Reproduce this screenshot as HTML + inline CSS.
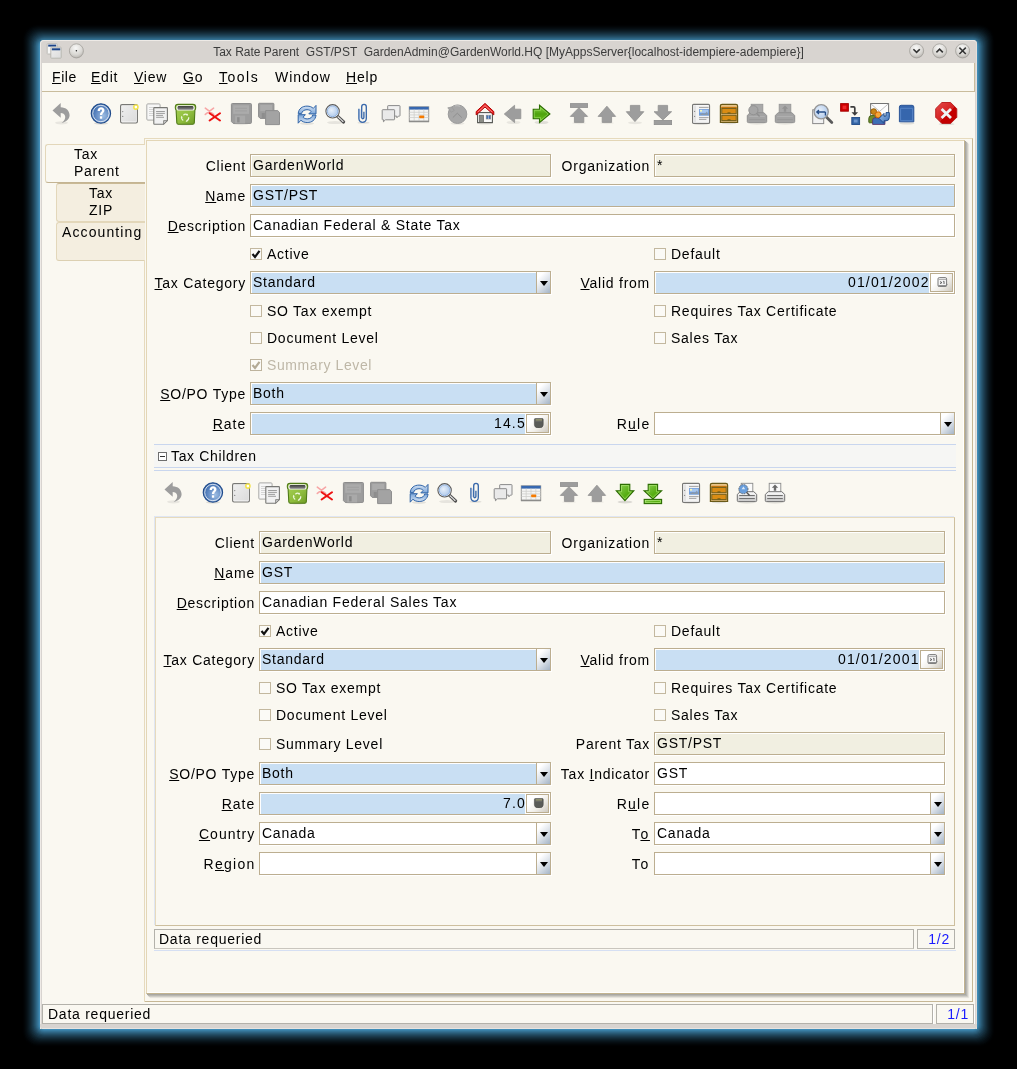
<!DOCTYPE html><html><head><meta charset="utf-8"><style>
*{margin:0;padding:0;box-sizing:border-box}
html,body{width:1017px;height:1069px;background:#000;overflow:hidden}
body{position:relative;font-family:"Liberation Sans",sans-serif;font-size:14px;letter-spacing:.75px;color:#000}
.a{position:absolute}
.t{position:absolute;white-space:pre;line-height:23px;height:23px;will-change:transform}
.u{text-decoration:underline;text-decoration-thickness:1px;text-underline-offset:1px}
.f{position:absolute;height:23px;border:1px solid #bcae90;box-shadow:inset 1px 1px 0 #fff,1px 1px 0 #fff;white-space:pre;overflow:hidden}
.fv{position:absolute;top:0;line-height:21px;height:21px;white-space:pre;will-change:transform}
.ro{background:#f1efe1}
.mb{background:#c9dff3}
.wh{background:#fff}
.cb{position:absolute;width:12px;height:12px;border:1px solid #c3b89f;background:#fbfaf6}
.dd{position:absolute;top:0;right:0;width:14px;height:21px;border-left:1px solid #bcae90;background:linear-gradient(135deg,#fff 20%,#dde3ea 55%,#a4b4c6)}
.dd:after{content:"";position:absolute;left:3px;top:9px;border-left:4.5px solid transparent;border-right:4.5px solid transparent;border-top:5px solid #000}
.bt{position:absolute;top:1px;right:1px;width:23px;height:19px;border:1px solid #bcae90;box-shadow:0 0 0 1px #fff;background:linear-gradient(135deg,#fff 30%,#f1efea 60%,#cfcac0)}
</style></head><body>
<div class="a" style="left:40px;top:42px;width:937px;height:987px;border-radius:4px;box-shadow:0 0 0 1px rgb(64,140,182),0 0 0 2px rgb(57,126,164),0 0 0 3px rgb(51,113,147),0 0 0 4px rgb(46,100,131),0 0 0 5px rgb(40,89,115),0 0 0 6px rgb(35,77,101),0 0 0 7px rgb(30,67,87),0 0 0 8px rgb(26,57,75),0 0 0 9px rgb(22,48,63),0 0 0 10px rgb(18,40,52),0 0 0 11px rgb(14,32,42),0 0 0 12px rgb(11,25,33),0 0 0 13px rgb(8,19,25),0 0 0 14px rgb(6,13,18),0 0 0 15px rgb(4,9,12),0 0 0 16px rgb(2,5,7),0 0 0 17px rgb(1,2,3),0 0 0 18px rgb(0,0,1)"></div>
<div class="a" style="left:40px;top:40px;width:937px;height:989px;border-radius:4px 4px 3px 3px;background:#d8d4d0"></div>
<div class="a" style="left:40px;top:40px;width:937px;height:989px;border-radius:4px 4px 0 0;border:1px solid #eeeae6;border-bottom:none;border-right-color:#e4e0dc"></div>
<div class="t" style="left:40px;top:41px;width:937px;height:22px;line-height:22px;text-align:center;font-size:12px;letter-spacing:0;color:#3c3c3c">Tax Rate Parent  GST/PST  GardenAdmin@GardenWorld.HQ [MyAppsServer{localhost-idempiere-adempiere}]</div>
<div class="a" style="left:42px;top:63px;width:933px;height:961px;background:#faf8f1"></div>
<div class="a" style="left:974px;top:63px;width:1px;height:29px;background:#c9bc9c"></div>
<div class="a" style="left:42px;top:91px;width:933px;height:1px;background:#c9bc9c"></div>
<div class="t " style="left:52px;top:66px;letter-spacing:0.6px"><span class="u">F</span>ile</div>
<div class="t " style="left:91px;top:66px;letter-spacing:0.75px"><span class="u">E</span>dit</div>
<div class="t " style="left:134px;top:66px;letter-spacing:0.75px"><span class="u">V</span>iew</div>
<div class="t " style="left:183px;top:66px;letter-spacing:0.75px"><span class="u">G</span>o</div>
<div class="t " style="left:219px;top:66px;letter-spacing:1.5px"><span class="u">T</span>ools</div>
<div class="t " style="left:275px;top:66px;letter-spacing:1px">Window</div>
<div class="t " style="left:346px;top:66px;letter-spacing:0.85px"><span class="u">H</span>elp</div>
<div class="a" style="left:56px;top:183px;width:89px;height:39px;background:#f4eee0;border:1px solid #e3d7ba;border-right:none;border-radius:3px 0 0 3px;border-top-color:#c9b995"></div>
<div class="a" style="left:56px;top:222px;width:89px;height:39px;background:#f4eee0;border:1px solid #e3d7ba;border-right:none;border-radius:3px 0 0 3px;border-bottom-color:#dcd0b2"></div>
<div class="a" style="left:45px;top:144px;width:100px;height:39px;background:#faf8f1;border:1px solid #e3d7ba;border-right:none;border-radius:3px 0 0 3px;border-bottom-color:#c4b493"></div>
<div class="t " style="left:74px;top:143px;">Tax</div>
<div class="t " style="left:74px;top:160px;">Parent</div>
<div class="t " style="left:89px;top:182px;">Tax</div>
<div class="t " style="left:89px;top:199px;">ZIP</div>
<div class="t " style="left:62px;top:221px;letter-spacing:1.1px">Accounting</div>
<div class="a" style="left:144px;top:138px;width:829px;height:864px;border:1px solid #e6dabd;border-left:none;border-right-color:#c6b795;border-bottom-color:#c6b795"></div>
<div class="a" style="left:144px;top:138px;width:1px;height:7px;background:#e6dabd"></div>
<div class="a" style="left:144px;top:260px;width:1px;height:742px;background:#e6dabd"></div>
<div class="a" style="left:146px;top:140px;width:819px;height:854px;border:1px solid #e3d6b6;border-right-color:#c2b38f;border-bottom-color:#c2b38f;box-shadow:inset -1px -1px 0 #fff,1px 1px 0 #a9a8a3,2px 2px 1px #b9b8b2,3px 3px 1px #d3d1ca,4px 4px 1px #e9e7e0"></div>
<div class="t " style="left:44px;top:155px;width:202.0px;text-align:right;">Client</div>
<div class="f ro" style="left:250px;top:154px;width:301px"><div class="fv" style="left:2px">GardenWorld</div></div>
<div class="t " style="left:448px;top:155px;width:202.0px;text-align:right;">Organization</div>
<div class="f ro" style="left:654px;top:154px;width:301px"><div class="fv" style="left:2px">*</div></div>
<div class="t " style="left:44px;top:185px;width:202.15px;text-align:right;letter-spacing:0.9px;"><span class="u">N</span>ame</div>
<div class="f mb" style="left:250px;top:184px;width:705px"><div class="fv" style="left:2px">GST/PST</div></div>
<div class="t " style="left:44px;top:215px;width:202.0px;text-align:right;"><span class="u">D</span>escription</div>
<div class="f wh" style="left:250px;top:214px;width:705px"><div class="fv" style="left:2px">Canadian Federal &amp; State Tax</div></div>
<div class="cb" style="left:250px;top:248px"><svg width="10" height="10" style="position:absolute;left:0;top:0"><path d="M1.5 5 L4 8 L8.5 1.8" fill="none" stroke="#111" stroke-width="2.2"/></svg></div>
<div class="t " style="left:267px;top:243px;">Active</div>
<div class="cb" style="left:654px;top:248px"></div>
<div class="t " style="left:671px;top:243px;">Default</div>
<div class="t " style="left:44px;top:272px;width:202.0px;text-align:right;"><span class="u">T</span>ax Category</div>
<div class="f mb" style="left:250px;top:271px;width:301px"><div class="fv" style="left:2px">Standard</div><div class="dd"></div></div>
<div class="t " style="left:448px;top:272px;width:202.0px;text-align:right;"><span class="u">V</span>alid from</div>
<div class="f mb" style="left:654px;top:271px;width:301px"><div class="fv" style="right:24.5px;text-align:right;letter-spacing:1.15px">01/01/2002</div><div class="bt"><svg width="11" height="10" style="position:absolute;left:6px;top:3px"><use href="#calico"/></svg></div></div>
<div class="cb" style="left:250px;top:305px"></div>
<div class="t " style="left:267px;top:300px;">SO Tax exempt</div>
<div class="cb" style="left:654px;top:305px"></div>
<div class="t " style="left:671px;top:300px;">Requires Tax Certificate</div>
<div class="cb" style="left:250px;top:332px"></div>
<div class="t " style="left:267px;top:327px;">Document Level</div>
<div class="cb" style="left:654px;top:332px"></div>
<div class="t " style="left:671px;top:327px;">Sales Tax</div>
<div class="cb" style="left:250px;top:359px;border-color:#bdb39d"><svg width="10" height="10" style="position:absolute;left:0;top:0"><path d="M1.5 5 L4 8 L8.5 1.8" fill="none" stroke="#b3aa96" stroke-width="2.2"/></svg></div>
<div class="t " style="left:267px;top:354px;color:#beb7a7;letter-spacing:.6px;">Summary Level</div>
<div class="t " style="left:44px;top:383px;width:202.0px;text-align:right;"><span class="u">S</span>O/PO Type</div>
<div class="f mb" style="left:250px;top:382px;width:301px"><div class="fv" style="left:2px">Both</div><div class="dd"></div></div>
<div class="t " style="left:44px;top:413px;width:202.25px;text-align:right;letter-spacing:1.0px;"><span class="u">R</span>ate</div>
<div class="f mb" style="left:250px;top:412px;width:301px"><div class="fv" style="right:24.5px;text-align:right;letter-spacing:1.15px">14.5</div><div class="bt"><svg width="11" height="10" style="position:absolute;left:6px;top:3px"><use href="#calcico"/></svg></div></div>
<div class="t " style="left:448px;top:413px;width:202.5px;text-align:right;letter-spacing:1.25px;">R<span class="u">u</span>le</div>
<div class="f wh" style="left:654px;top:412px;width:301px"><div class="dd"></div></div>
<div class="a" style="left:154px;top:444px;width:802px;height:24px;background:#f6f6f4;border-top:1px solid #c9d6ee;border-bottom:1px solid #c9d6ee"></div>
<div class="a" style="left:154px;top:470px;width:802px;height:1px;background:#c9d6ee"></div>
<div class="a" style="left:158px;top:452px;width:9px;height:9px;border:1px solid #6f6f6f;background:#fff"><div class="a" style="left:1px;top:3px;width:5px;height:1px;background:#333"></div></div>
<div class="t " style="left:171px;top:445px;letter-spacing:.65px">Tax Children</div>
<div class="a" style="left:155px;top:517px;width:800px;height:409px;border:1px solid #e6dabd;border-right-color:#cdbf9e;border-bottom-color:#cdbf9e;box-shadow:-1px -1px 0 #dfe6f3"></div>
<div class="t " style="left:53px;top:532px;width:202.0px;text-align:right;">Client</div>
<div class="f ro" style="left:259px;top:531px;width:292px"><div class="fv" style="left:2px">GardenWorld</div></div>
<div class="t " style="left:448px;top:532px;width:202.0px;text-align:right;">Organization</div>
<div class="f ro" style="left:654px;top:531px;width:291px"><div class="fv" style="left:2px">*</div></div>
<div class="t " style="left:53px;top:562px;width:202.15px;text-align:right;letter-spacing:0.9px;"><span class="u">N</span>ame</div>
<div class="f mb" style="left:259px;top:561px;width:686px"><div class="fv" style="left:2px">GST</div></div>
<div class="t " style="left:53px;top:592px;width:202.0px;text-align:right;"><span class="u">D</span>escription</div>
<div class="f wh" style="left:259px;top:591px;width:686px"><div class="fv" style="left:2px">Canadian Federal Sales Tax</div></div>
<div class="cb" style="left:259px;top:625px"><svg width="10" height="10" style="position:absolute;left:0;top:0"><path d="M1.5 5 L4 8 L8.5 1.8" fill="none" stroke="#111" stroke-width="2.2"/></svg></div>
<div class="t " style="left:276px;top:620px;">Active</div>
<div class="cb" style="left:654px;top:625px"></div>
<div class="t " style="left:671px;top:620px;">Default</div>
<div class="t " style="left:53px;top:649px;width:202.0px;text-align:right;"><span class="u">T</span>ax Category</div>
<div class="f mb" style="left:259px;top:648px;width:292px"><div class="fv" style="left:2px">Standard</div><div class="dd"></div></div>
<div class="t " style="left:448px;top:649px;width:202.0px;text-align:right;"><span class="u">V</span>alid from</div>
<div class="f mb" style="left:654px;top:648px;width:291px"><div class="fv" style="right:24.5px;text-align:right;letter-spacing:1.15px">01/01/2001</div><div class="bt"><svg width="11" height="10" style="position:absolute;left:6px;top:3px"><use href="#calico"/></svg></div></div>
<div class="cb" style="left:259px;top:682px"></div>
<div class="t " style="left:276px;top:677px;">SO Tax exempt</div>
<div class="cb" style="left:654px;top:682px"></div>
<div class="t " style="left:671px;top:677px;">Requires Tax Certificate</div>
<div class="cb" style="left:259px;top:709px"></div>
<div class="t " style="left:276px;top:704px;">Document Level</div>
<div class="cb" style="left:654px;top:709px"></div>
<div class="t " style="left:671px;top:704px;">Sales Tax</div>
<div class="cb" style="left:259px;top:738px"></div>
<div class="t " style="left:276px;top:733px;">Summary Level</div>
<div class="t " style="left:448px;top:733px;width:202.0px;text-align:right;">Parent Tax</div>
<div class="f ro" style="left:654px;top:732px;width:291px"><div class="fv" style="left:2px">GST/PST</div></div>
<div class="t " style="left:53px;top:763px;width:202.0px;text-align:right;"><span class="u">S</span>O/PO Type</div>
<div class="f mb" style="left:259px;top:762px;width:292px"><div class="fv" style="left:2px">Both</div><div class="dd"></div></div>
<div class="t " style="left:448px;top:763px;width:202.0px;text-align:right;">Tax <span class="u">I</span>ndicator</div>
<div class="f wh" style="left:654px;top:762px;width:291px"><div class="fv" style="left:2px">GST</div></div>
<div class="t " style="left:53px;top:793px;width:202.25px;text-align:right;letter-spacing:1.0px;"><span class="u">R</span>ate</div>
<div class="f mb" style="left:259px;top:792px;width:292px"><div class="fv" style="right:24.5px;text-align:right;letter-spacing:1.15px">7.0</div><div class="bt"><svg width="11" height="10" style="position:absolute;left:6px;top:3px"><use href="#calcico"/></svg></div></div>
<div class="t " style="left:448px;top:793px;width:202.5px;text-align:right;letter-spacing:1.25px;">R<span class="u">u</span>le</div>
<div class="f wh" style="left:654px;top:792px;width:291px"><div class="dd"></div></div>
<div class="t " style="left:53px;top:823px;width:202.3px;text-align:right;letter-spacing:1.05px;"><span class="u">C</span>ountry</div>
<div class="f wh" style="left:259px;top:822px;width:292px"><div class="fv" style="left:2px">Canada</div><div class="dd"></div></div>
<div class="t " style="left:447px;top:823px;width:202.95px;text-align:right;letter-spacing:1.7px;">T<span class="u">o</span></div>
<div class="f wh" style="left:654px;top:822px;width:291px"><div class="fv" style="left:2px">Canada</div><div class="dd"></div></div>
<div class="t " style="left:53px;top:853px;width:202.5px;text-align:right;letter-spacing:1.25px;">R<span class="u">e</span>gion</div>
<div class="f wh" style="left:259px;top:852px;width:292px"><div class="dd"></div></div>
<div class="t " style="left:447px;top:853px;width:202.95px;text-align:right;letter-spacing:1.7px;">To</div>
<div class="f wh" style="left:654px;top:852px;width:291px"><div class="dd"></div></div>
<div class="a" style="left:154px;top:929px;width:760px;height:20px;border:1px solid #b3b1aa;border-bottom-color:#c9c6be"></div>
<div class="a" style="left:917px;top:929px;width:38px;height:20px;border:1px solid #b3b1aa"></div>
<div class="a" style="left:154px;top:950px;width:802px;height:1px;background:#d5dff3"></div>
<div class="t " style="left:159px;top:928px;">Data requeried</div>
<div class="t " style="left:917px;top:928px;width:33px;text-align:right;color:#1a1aff">1/2</div>
<div class="a" style="left:42px;top:1004px;width:891px;height:20px;border:1px solid #b3b1aa;box-shadow:1px 1px 0 #fff"></div>
<div class="a" style="left:936px;top:1004px;width:38px;height:20px;border:1px solid #b3b1aa;box-shadow:1px 1px 0 #fff"></div>
<div class="t " style="left:48px;top:1003px;">Data requeried</div>
<div class="t " style="left:936px;top:1003px;width:33px;text-align:right;color:#1a1aff">1/1</div>
<div class="a" style="left:40px;top:1024px;width:937px;height:5px;background:#d8d4d0;border-radius:0 0 3px 3px;border-bottom:1px solid #e8e4e0"></div>
<svg width="1017" height="1069" style="position:absolute;left:0;top:0;pointer-events:none"><defs>
<radialGradient id="ghelp" cx=".62" cy=".62" r=".75"><stop offset="0" stop-color="#9dbde3"/><stop offset=".6" stop-color="#5580bd"/><stop offset="1" stop-color="#2f5f9f"/></radialGradient>
<linearGradient id="gpage" x1="0" y1="0" x2="1" y2="1"><stop offset="0" stop-color="#eeeeee"/><stop offset="1" stop-color="#dcdcdc"/></linearGradient>
<linearGradient id="gtrash" x1="0" y1="0" x2="1" y2="1"><stop offset="0" stop-color="#a9d356"/><stop offset=".6" stop-color="#8dbb3c"/><stop offset="1" stop-color="#6d9a26"/></linearGradient><linearGradient id="gtrin" x1="0" y1="0" x2="0" y2="1"><stop offset="0" stop-color="#3f3f3f"/><stop offset="1" stop-color="#8a8a8a"/></linearGradient>
<linearGradient id="grefr" x1="0" y1="0" x2="0" y2="1"><stop offset="0" stop-color="#dbe7f6"/><stop offset="1" stop-color="#7aa5d8"/></linearGradient>
<radialGradient id="glens" cx=".4" cy=".4" r=".7"><stop offset="0" stop-color="#e8f0fa"/><stop offset="1" stop-color="#aac6ea"/></radialGradient>
<linearGradient id="ggreen" x1="0" y1="0" x2="0" y2="1"><stop offset="0" stop-color="#8fdc4a"/><stop offset=".5" stop-color="#4ea20e"/><stop offset="1" stop-color="#6cc51d"/></linearGradient>
<linearGradient id="ggreen2" x1="0" y1="0" x2="1" y2="1"><stop offset="0" stop-color="#8fd35a"/><stop offset=".6" stop-color="#56ad12"/><stop offset="1" stop-color="#74c924"/></linearGradient>
<linearGradient id="gprn" x1="0" y1="0" x2="0" y2="1"><stop offset="0" stop-color="#fdfdfd"/><stop offset="1" stop-color="#c9c9c9"/></linearGradient>
<linearGradient id="greq" x1="0" y1="0" x2="1" y2="1"><stop offset="0" stop-color="#9cc0ea"/><stop offset="1" stop-color="#3a6cb3"/></linearGradient>
<linearGradient id="gexit" x1="0" y1="0" x2="1" y2="1"><stop offset="0" stop-color="#e44848"/><stop offset=".55" stop-color="#d42020"/><stop offset=".56" stop-color="#c40000"/><stop offset="1" stop-color="#c40000"/></linearGradient>
<radialGradient id="gbtn" cx=".45" cy=".3" r=".8"><stop offset="0" stop-color="#f8f8f7"/><stop offset=".6" stop-color="#d9d7d3"/><stop offset="1" stop-color="#aeaba6"/></radialGradient>
<symbol id="i-undo" viewBox="0 0 22 22" overflow="visible"><ellipse cx="11.5" cy="20.8" rx="6.5" ry="1.6" fill="#000" opacity=".07"/>
<path d="M2.5 8.4 L10.7 0.9 L10.7 5.2 C16 5.2 19.6 8.8 19.6 13.2 C19.6 16.8 16.5 19.8 11.6 21 C14.6 18.8 15.6 16.2 15.1 14 C14.6 11.9 12.9 11 10.7 11 L10.7 15.8 Z" fill="#9d9d9d"/></symbol>
<symbol id="i-help" viewBox="0 0 22 22" overflow="visible"><ellipse cx="11" cy="21.3" rx="7" ry="1.3" fill="#000" opacity=".12"/>
<circle cx="10.9" cy="11.5" r="9.7" fill="url(#ghelp)" stroke="#1f4a8a" stroke-width="1.1"/>
<circle cx="10.9" cy="11.5" r="8.2" fill="none" stroke="#fff" stroke-width=".9" opacity=".85"/>
<path d="M7.6 8.9 C7.6 6.6 9.2 5.3 11.1 5.3 C13.1 5.3 14.5 6.6 14.5 8.4 C14.5 10.5 12.2 10.9 12.2 13 L9.9 13 C9.9 10.3 12 9.9 12 8.5 C12 7.8 11.6 7.4 11 7.4 C10.3 7.4 10 7.9 10 8.9 Z" fill="#fff"/>
<rect x="9.9" y="14.3" width="2.3" height="2.4" fill="#fff"/></symbol>
<symbol id="i-new" viewBox="0 0 22 22" overflow="visible"><rect x="2.6" y="2.6" width="16.8" height="18.4" rx="1.4" fill="#fff" stroke="#787875" stroke-width="1.2"/>
<rect x="4" y="4" width="14" height="15.6" fill="url(#gpage)"/>
<circle cx="4.7" cy="9.6" r=".7" fill="#8a8a8a"/><circle cx="4.7" cy="14.4" r=".7" fill="#8a8a8a"/>
<circle cx="17.9" cy="5.1" r="2.1" fill="#fff" stroke="#f3e34a" stroke-width="1.5"/></symbol>
<symbol id="i-copy" viewBox="0 0 22 22" overflow="visible"><rect x="0.8" y="1.9" width="13.3" height="16.2" rx="1" fill="#f7f7f7" stroke="#a9a9a7" stroke-width="1"/>
<path d="M3 5.5H12M3 7.5H12M3 9.5H12M3 11.5H12M3 13.5H10" stroke="#d0d0d0" stroke-width=".9"/>
<path d="M7.8 6.2 Q7.8 5.6 8.4 5.6 H20.8 Q21.4 5.6 21.4 6.2 V18.6 L17.6 22.3 H8.4 Q7.8 22.3 7.8 21.7 Z" fill="#f1f1f1" stroke="#787875" stroke-width="1.1"/>
<path d="M17.6 22.3 V18.6 H21.4 Z" fill="#c9c9c9" stroke="#787875" stroke-width=".8"/>
<path d="M10.1 9.5H18.9M10.1 11.4H18.9M10.1 13.4H17M10.1 15.3H18" stroke="#9a9a9a" stroke-width=".95"/></symbol>
<symbol id="i-trash" viewBox="0 0 22 22" overflow="visible"><ellipse cx="11.5" cy="22.3" rx="8" ry="1" fill="#000" opacity=".15"/>
<path d="M1.3 5.2 Q1.3 2.4 4.1 2.4 H18.9 Q21.7 2.4 21.7 5.2 Q21.7 7.2 20.9 8 L20.3 20.8 Q20.2 22.2 18.8 22.2 H4.3 Q2.9 22.2 2.8 20.8 L2.1 8 Q1.3 7.2 1.3 5.2 Z" fill="url(#gtrash)" stroke="#4f7a16" stroke-width="1.1"/>
<rect x="2.4" y="3.3" width="18.2" height="5.3" rx="2.2" fill="#f4f4f2"/>
<rect x="3.6" y="4.1" width="15.8" height="3.7" rx="1.2" fill="url(#gtrin)"/>
<path d="M9.4 13.2 A3.5 3.5 0 0 1 13.4 12.7 M14.7 15.2 A3.5 3.5 0 0 1 12.7 18.8 M9.2 18.5 A3.5 3.5 0 0 1 7.6 14.8" fill="none" stroke="#eef8dc" stroke-width="1.2"/>
<path d="M13.4 11.6 L14.2 13.6 L12.2 13.6 Z M11.6 19.8 L12.7 18 L13.6 19.8 Z M6.7 15.6 L7.7 13.8 L8.7 15.6 Z" fill="#eef8dc"/></symbol>
<symbol id="i-delete" viewBox="0 0 22 22" overflow="visible"><path d="M3.3 6.2 L11.6 12.4 M3.3 12.4 L11.6 6.2" stroke="#f7a6a6" stroke-width="1.6" stroke-linecap="round"/>
<path d="M7.6 11.2 L18 18.5 M7.6 18.5 L18 11.2" stroke="#ee1111" stroke-width="2" stroke-linecap="round"/></symbol>
<symbol id="i-save" viewBox="0 0 22 22" overflow="visible"><ellipse cx="11" cy="22" rx="7" ry="1.2" fill="#000" opacity=".07"/>
<path d="M1.4 2.4 Q1.4 1.5 2.3 1.5 H20.5 Q21.4 1.5 21.4 2.4 V20.5 Q21.4 21.4 20.5 21.4 H3.2 L1.4 19.6 Z" fill="#9d9d9d" stroke="#8c8c8c" stroke-width="1"/>
<rect x="3.2" y="3.3" width="15.8" height="8.6" fill="#ababab"/>
<path d="M5 6.3H17M5 8.9H17" stroke="#9e9e9e" stroke-width=".8"/>
<rect x="5.1" y="13.6" width="10" height="7.8" fill="#a9a9a9"/>
<rect x="7.1" y="15.2" width="2.5" height="5.2" fill="#8d8d8d"/></symbol>
<symbol id="i-savem" viewBox="0 0 22 22" overflow="visible"><path d="M0.6 2 Q0.6 1.3 1.3 1.3 H15.2 Q15.9 1.3 15.9 2 V16.4 H2.2 L0.6 14.8 Z" fill="#9d9d9d" stroke="#8c8c8c" stroke-width="1"/>
<rect x="2.2" y="2.8" width="12" height="6.4" fill="#ababab"/>
<rect x="3.8" y="11" width="3" height="5" fill="#8d8d8d"/>
<path d="M7.6 8.6 H19.7 L21.5 10.4 V22.6 H7.6 Z" fill="#a3a3a3" stroke="#8f8f8f" stroke-width="1"/></symbol>
<symbol id="i-refresh" viewBox="0 0 22 22" overflow="visible"><ellipse cx="11" cy="21.6" rx="7" ry="1.4" fill="#000" opacity=".09"/>
<path d="M2.2 11.6 C2.6 6.6 6.4 4.1 11 4.1 C13.9 4.1 16 5.1 17.3 6.4 L20 3.4 L20 11.9 L12.8 11.9 L15.2 9.4 C14.2 8.4 12.8 7.7 11 7.7 C8.1 7.7 5.9 9.3 5.6 11.6 Z" fill="url(#grefr)" stroke="#2f63a6" stroke-width="1"/>
<path d="M2.2 11.6 C2.6 6.6 6.4 4.1 11 4.1 C13.9 4.1 16 5.1 17.3 6.4 L20 3.4 L20 11.9 L12.8 11.9 L15.2 9.4 C14.2 8.4 12.8 7.7 11 7.7 C8.1 7.7 5.9 9.3 5.6 11.6 Z" transform="rotate(180 11.1 12.3)" fill="url(#grefr)" stroke="#2f63a6" stroke-width="1"/></symbol>
<symbol id="i-find" viewBox="0 0 22 22" overflow="visible"><ellipse cx="11" cy="20.6" rx="8" ry="1.5" fill="#000" opacity=".08"/>
<path d="M13.6 14.4 L19.6 20" stroke="#505050" stroke-width="3.2" stroke-linecap="round"/>
<path d="M13.9 14.7 L19.3 19.7" stroke="#e8e8e8" stroke-width="1.2" stroke-linecap="round" stroke-dasharray="1 1"/>
<circle cx="8.6" cy="9.3" r="6.7" fill="#fff" stroke="#5a5a5a" stroke-width="1.1"/>
<circle cx="8.6" cy="9.3" r="5.4" fill="url(#glens)" stroke="#7ca3d8" stroke-width=".8"/></symbol>
<symbol id="i-attach" viewBox="0 0 22 22" overflow="visible"><ellipse cx="11.5" cy="20.8" rx="6" ry="1" fill="#000" opacity=".1"/>
<path d="M6.9 6.8 V16.6 A3.7 3.7 0 0 0 14.3 16.6 V4.7 A2.3 2.3 0 0 0 9.7 4.7 V15.6 A1.1 1.1 0 0 0 11.9 15.6 V9.8" fill="none" stroke="#3868ab" stroke-width="1.35"/>
<path d="M7.8 7.5 V16" stroke="#7f9fcf" stroke-width="1"/></symbol>
<symbol id="i-chat" viewBox="0 0 22 22" overflow="visible"><path d="M8.2 3.6 H19.5 Q20 3.6 20 4.1 V13.6 Q20 14.1 19.5 14.1 H18.3 L16.9 15.8 L16.7 14.1 H8.2 Q7.7 14.1 7.7 13.6 V4.1 Q7.7 3.6 8.2 3.6 Z" fill="#f0f0f0" stroke="#8a8a8a" stroke-width="1"/>
<path d="M2.7 7.7 H14.1 Q14.6 7.7 14.6 8.2 V17.3 Q14.6 17.8 14.1 17.8 H5.5 L3.4 19.8 L3.7 17.8 H2.7 Q2.2 17.8 2.2 17.3 V8.2 Q2.2 7.7 2.7 7.7 Z" fill="#e9e9e9" stroke="#8a8a8a" stroke-width="1"/></symbol>
<symbol id="i-grid" viewBox="0 0 22 22" overflow="visible"><rect x="1.3" y="4.8" width="19.4" height="14.8" fill="#f5f5f3" stroke="#9a9a98" stroke-width="1"/>
<rect x="1.3" y="4.8" width="19.4" height="2.8" fill="#3768b0"/>
<path d="M1.5 10.3H20.5M1.5 12.9H20.5M1.5 15.5H20.5M6.2 7.6V18.5M11 7.6V18.5M15.8 7.6V18.5" stroke="#cfcfcd" stroke-width=".8"/>
<rect x="11.2" y="13.4" width="5" height="2.8" rx=".8" fill="#f57a00"/>
<rect x="1" y="18.6" width="20" height="1.6" fill="#8c8c8a"/></symbol>
<symbol id="i-history" viewBox="0 0 22 22" overflow="visible"><ellipse cx="11.5" cy="21.5" rx="7" ry="1.3" fill="#000" opacity=".07"/>
<circle cx="11.5" cy="12.2" r="9.3" fill="#a7a7a7" stroke="#9b9b9b" stroke-width="1"/>
<path d="M6.8 15.6 L11.3 11.2 L15.8 15.6" fill="none" stroke="#8f8f8f" stroke-width="1"/>
<path d="M1.8 5.8 L5.8 5 L8.3 8.5 L5.2 10.2 Z" fill="#a7a7a7" stroke="#9b9b9b" stroke-width=".8"/>
<path d="M9 3.8 Q12 3 14 4.6" fill="none" stroke="#b9b9b9" stroke-width="1.2"/></symbol>
<symbol id="i-home" viewBox="0 0 22 22" overflow="visible"><ellipse cx="11" cy="21.3" rx="8" ry="1.2" fill="#000" opacity=".1"/>
<rect x="3.6" y="10.6" width="14.8" height="10" fill="#fafafa" stroke="#555753" stroke-width="1.1"/>
<rect x="5.3" y="13.2" width="4.3" height="7.2" fill="#8a8c86" stroke="#5a5a58" stroke-width=".6"/>
<rect x="12.2" y="13.2" width="4.5" height="3.8" fill="#3f6fb5" stroke="#8a8a88" stroke-width=".6"/>
<path d="M14.45 13.3V17" stroke="#dde" stroke-width=".6"/>
<path d="M2.2 9.6 L11 1.4 L19.8 9.6 V12.9 L11 5 L2.2 12.9 Z" fill="#ef2929" stroke="#b00000" stroke-width="1" stroke-linejoin="round"/>
<path d="M4 10 L11 3.6 L18 10" fill="none" stroke="#f79a9a" stroke-width=".8"/></symbol>
<symbol id="i-back" viewBox="0 0 22 22" overflow="visible"><ellipse cx="11.5" cy="20.5" rx="7" ry="1.6" fill="#000" opacity=".07"/>
<path d="M2.3 12 L12.6 3.3 V7.2 H18.8 V16.7 H12.6 V20.6 Z" fill="#9d9d9d" stroke="#909090" stroke-width=".8" stroke-linejoin="round"/></symbol>
<symbol id="i-fwd" viewBox="0 0 22 22" overflow="visible"><ellipse cx="11.5" cy="20.5" rx="7" ry="1.6" fill="#000" opacity=".1"/>
<path d="M19.9 12 L9.5 3.3 V7.2 H3.2 V16.7 H9.5 V20.6 Z" fill="url(#ggreen)" stroke="#2c6c02" stroke-width="1.1" stroke-linejoin="miter"/>
<path d="M18.2 12 L10.6 5.6 V8.3 H4.3 V15.6 H10.6 V18.3 Z" fill="none" stroke="#a6e26f" stroke-width=".7" opacity=".8"/></symbol>
<symbol id="i-first" viewBox="0 0 22 22" overflow="visible"><ellipse cx="11" cy="21" rx="7" ry="1.2" fill="#000" opacity=".06"/>
<rect x="2.4" y="1.6" width="17.2" height="3.9" fill="#9d9d9d" stroke="#8e8e8e" stroke-width=".8"/>
<path d="M10.95 5.7 L19.6 14.4 H15.8 V20.4 H6.4 V14.4 H2.3 Z" fill="#9d9d9d" stroke="#8e8e8e" stroke-width=".8"/></symbol>
<symbol id="i-up" viewBox="0 0 22 22" overflow="visible"><ellipse cx="11" cy="21" rx="7" ry="1.2" fill="#000" opacity=".06"/>
<path d="M10.9 4.2 L19.6 14.4 H15.6 V20.4 H6.2 V14.4 H2.1 Z" fill="#9d9d9d" stroke="#8e8e8e" stroke-width=".8"/></symbol>
<symbol id="i-down" viewBox="0 0 22 22" overflow="visible"><ellipse cx="11" cy="20.8" rx="7" ry="1.4" fill="#000" opacity=".07"/>
<path d="M6.4 3.4 H15.8 V9.7 H19.8 L10.95 19.6 L2.3 9.7 H6.4 Z" fill="#9d9d9d" stroke="#8e8e8e" stroke-width=".8"/></symbol>
<symbol id="i-last" viewBox="0 0 22 22" overflow="visible"><path d="M6.2 3.4 H15.6 V9.7 H19.6 L10.9 17.9 L2.1 9.7 H6.2 Z" fill="#9d9d9d" stroke="#8e8e8e" stroke-width=".8"/>
<rect x="2.2" y="18.4" width="17.4" height="4.2" fill="#9d9d9d" stroke="#8e8e8e" stroke-width=".8"/></symbol>
<symbol id="i-downg" viewBox="0 0 22 22" overflow="visible"><ellipse cx="11" cy="21" rx="7.5" ry="1.5" fill="#000" opacity=".12"/>
<path d="M6.4 3.4 H15.8 V9.7 H19.8 L10.95 19.6 L2.3 9.7 H6.4 Z" fill="url(#ggreen2)" stroke="#2c6c02" stroke-width="1.1"/>
<path d="M7.5 4.5 H14.7 V10.8 H17.4 L10.95 18 L4.6 10.8 H7.5 Z" fill="none" stroke="#b5ec80" stroke-width=".7" opacity=".8"/></symbol>
<symbol id="i-lastg" viewBox="0 0 22 22" overflow="visible"><path d="M6.2 3.4 H15.6 V9.7 H19.6 L10.9 17.9 L2.1 9.7 H6.2 Z" fill="url(#ggreen2)" stroke="#2c6c02" stroke-width="1.1"/>
<path d="M7.3 4.5 H14.5 V10.8 H17.2 L10.9 16.6 L4.5 10.8 H7.3 Z" fill="none" stroke="#b5ec80" stroke-width=".7" opacity=".8"/>
<rect x="2.2" y="18.4" width="17.4" height="4.2" fill="url(#ggreen2)" stroke="#2c6c02" stroke-width="1.1"/>
<rect x="3.4" y="19.6" width="15" height="1.8" fill="none" stroke="#b5ec80" stroke-width=".6"/></symbol>
<symbol id="i-report" viewBox="0 0 22 22" overflow="visible"><ellipse cx="11" cy="22" rx="7" ry="1" fill="#000" opacity=".1"/>
<rect x="2.6" y="2.4" width="16.9" height="19" rx="1" fill="#fff" stroke="#777775" stroke-width="1.2"/>
<rect x="3.6" y="3.4" width="14.9" height="17" fill="#f3f3f3"/>
<rect x="3.6" y="3.4" width="2.4" height="17" fill="#e4e4e4"/>
<circle cx="4.6" cy="9.4" r=".6" fill="#888"/><circle cx="4.6" cy="14.4" r=".6" fill="#888"/>
<rect x="9" y="7.1" width="10" height="6.6" fill="#6f9ddb"/>
<rect x="9.8" y="7.9" width="8.4" height="3" fill="#a6c6ee"/>
<path d="M9.8 12.9 L12.5 11 L14.5 12 L17 9.5 L18.2 12.9 Z" fill="#8a99aa"/>
<circle cx="11" cy="8.8" r="1" fill="#ffffb0"/>
<path d="M9 5.4H18.6M9 15.6H18.6M9 17.4H16.4" stroke="#9a9a9a" stroke-width=".9"/></symbol>
<symbol id="i-archive" viewBox="0 0 22 22" overflow="visible"><ellipse cx="11" cy="21.4" rx="7" ry="1" fill="#000" opacity=".1"/>
<path d="M2.4 4 Q2.4 2.3 4.1 2.3 H17.9 Q19.6 2.3 19.6 4 V20.4 H2.4 Z" fill="#e9c487" stroke="#6a5a18" stroke-width="1.2"/>
<rect x="3.2" y="4.8" width="15.6" height="1.4" fill="#c9780e"/>
<rect x="3.8" y="6.4" width="14.4" height="5.3" fill="#d98c14" stroke="#6a5a18" stroke-width=".9"/>
<rect x="3.8" y="13.3" width="14.4" height="5.3" fill="#d98c14" stroke="#6a5a18" stroke-width=".9"/>
<rect x="9.5" y="10.4" width="3" height="1.2" fill="#6a5a18"/><rect x="9.5" y="17.3" width="3" height="1.2" fill="#6a5a18"/></symbol>
<symbol id="i-pp" viewBox="0 0 22 22" overflow="visible"><ellipse cx="11" cy="21.5" rx="8" ry="1.2" fill="#000" opacity=".08"/>
<rect x="5.2" y="2.3" width="11.6" height="9.5" fill="#a9a9a9" stroke="#979797" stroke-width=".9"/>
<path d="M4.2 10.7 H17.8 L20.7 13.4 V19.6 Q20.7 20.6 19.7 20.6 H2.3 Q1.3 20.6 1.3 19.6 V13.4 Z" fill="#a3a3a3" stroke="#909090" stroke-width="1"/>
<path d="M3.2 14.6 H18.8" stroke="#b3b3b3" stroke-width=".9"/>
<path d="M3.2 17.6 H18.8" stroke="#999" stroke-width="1"/><circle cx="7.4" cy="8.2" r="4.6" fill="#a6a6a6" stroke="#8f8f8f" stroke-width=".9"/><path d="M10.5 11.3 L13.6 14.4" stroke="#8f8f8f" stroke-width="1.4"/></symbol>
<symbol id="i-print" viewBox="0 0 22 22" overflow="visible"><ellipse cx="11" cy="21.5" rx="8" ry="1.2" fill="#000" opacity=".08"/>
<rect x="5.2" y="2.3" width="11.6" height="9.5" fill="#a9a9a9" stroke="#979797" stroke-width=".9"/>
<path d="M4.2 10.7 H17.8 L20.7 13.4 V19.6 Q20.7 20.6 19.7 20.6 H2.3 Q1.3 20.6 1.3 19.6 V13.4 Z" fill="#a3a3a3" stroke="#909090" stroke-width="1"/>
<path d="M3.2 14.6 H18.8" stroke="#b3b3b3" stroke-width=".9"/>
<path d="M3.2 17.6 H18.8" stroke="#999" stroke-width="1"/><path d="M11 3.6 L14.2 6.8 H12.2 V9.8 H9.8 V6.8 H7.8 Z" fill="#939393"/></symbol>
<symbol id="i-ppc" viewBox="0 0 22 22" overflow="visible"><ellipse cx="11" cy="21.5" rx="8" ry="1.2" fill="#000" opacity=".08"/>
<rect x="5.2" y="2.3" width="11.6" height="9.5" fill="#fafafa" stroke="#8a8a8a" stroke-width=".9"/>
<path d="M4.2 10.7 H17.8 L20.7 13.4 V19.6 Q20.7 20.6 19.7 20.6 H2.3 Q1.3 20.6 1.3 19.6 V13.4 Z" fill="url(#gprn)" stroke="#707070" stroke-width="1"/>
<path d="M3.2 14.6 H18.8" stroke="#555" stroke-width=".9"/>
<path d="M3.2 17.6 H18.8" stroke="#666" stroke-width="1"/><circle cx="7.4" cy="8.2" r="4.6" fill="#6a9fdc" stroke="#555" stroke-width=".9" stroke-dasharray="1 .8"/><path d="M10.5 11.3 L13.6 14.4" stroke="#555" stroke-width="1.4"/><path d="M7.4 5.5 L9.2 8.2 H5.6 Z" fill="#dce9f8"/></symbol>
<symbol id="i-printc" viewBox="0 0 22 22" overflow="visible"><ellipse cx="11" cy="21.5" rx="8" ry="1.2" fill="#000" opacity=".08"/>
<rect x="5.2" y="2.3" width="11.6" height="9.5" fill="#fafafa" stroke="#8a8a8a" stroke-width=".9"/>
<path d="M4.2 10.7 H17.8 L20.7 13.4 V19.6 Q20.7 20.6 19.7 20.6 H2.3 Q1.3 20.6 1.3 19.6 V13.4 Z" fill="url(#gprn)" stroke="#707070" stroke-width="1"/>
<path d="M3.2 14.6 H18.8" stroke="#555" stroke-width=".9"/>
<path d="M3.2 17.6 H18.8" stroke="#666" stroke-width="1"/><path d="M11 3.6 L14.2 6.8 H12.2 V9.8 H9.8 V6.8 H7.8 Z" fill="#6a6a6a"/></symbol>
<symbol id="i-zoom" viewBox="0 0 22 22" overflow="visible"><rect x="0.7" y="7.8" width="11" height="13.8" fill="#f2f2f2" stroke="#8a8a8a" stroke-width="1"/>
<path d="M14.6 15.2 L19.8 20.4" stroke="#5a5a5a" stroke-width="2.8" stroke-linecap="round"/>
<circle cx="9.2" cy="9.8" r="7.1" fill="url(#glens)" stroke="#959595" stroke-width="1.3"/>
<path d="M4.8 10 H13.4 M7 8 L4.8 10 L7 12 M13.4 10 V13.6" fill="none" stroke="#264d86" stroke-width="1.3"/></symbol>
<symbol id="i-workflow" viewBox="0 0 22 22" overflow="visible"><rect x="0.6" y="1.6" width="7.8" height="7.6" fill="#cc0000" stroke="#a40000" stroke-width=".9"/>
<rect x="2.6" y="3.6" width="3.8" height="3.6" fill="#ef2929"/>
<path d="M10.4 4.9 H13.6 Q14.8 4.9 14.8 6.1 V11.5" fill="none" stroke="#3c3c3c" stroke-width="1.7"/>
<path d="M11.5 10.2 H18.1 L14.8 13.7 Z" fill="#3c3c3c"/>
<rect x="11.8" y="15.5" width="7.8" height="7" fill="#3465a4" stroke="#204a87" stroke-width=".9"/>
<rect x="13.8" y="17.5" width="3.8" height="3" fill="#6b94cc"/></symbol>
<symbol id="i-request" viewBox="0 0 22 22" overflow="visible"><rect x="2.6" y="1.5" width="18" height="12.6" fill="#fdfdfd" stroke="#737373" stroke-width="1"/>
<path d="M2.8 1.8 L11.6 9.4 L20.4 1.8" fill="none" stroke="#b0b0b0" stroke-width=".8"/>
<path d="M0.8 20 V16.5 Q0.8 13.6 3.6 13.6 H6 Q8.2 13.6 8.2 16 V20.3 Q8.2 20.8 7.6 20.8 H1.5 Q0.8 20.8 0.8 20 Z" fill="#6f8c2c" stroke="#3e5a12" stroke-width=".9"/>
<circle cx="5.7" cy="9.6" r="2.9" fill="#c98518" stroke="#8f5902" stroke-width=".9"/>
<path d="M4.6 22 V18.2 Q4.6 15.8 7 15.8 H14.6 Q16.9 15.8 16.9 18.2 V22.4 H4.6 Z" fill="#3d6fb6" stroke="#5c3566" stroke-width=".9"/>
<circle cx="10.2" cy="12.8" r="3" fill="#f4a63a" stroke="#ce5c00" stroke-width=".9"/>
<path d="M21.3 10.6 V15.6 Q21.3 18.8 18 18.8 H16 V21.4 L11 16.4 L16 11.4 V14.2 H17.6 Q18 14.2 18 13.6 V10.6 Z" fill="url(#greq)" stroke="#1f4a8a" stroke-width="1"/></symbol>
<symbol id="i-product" viewBox="0 0 22 22" overflow="visible"><ellipse cx="11" cy="21.3" rx="7.5" ry="1.2" fill="#000" opacity=".1"/>
<path d="M3.4 5 Q3.4 3.3 5.1 3.3 H16.1 Q17.8 3.3 17.8 5 V19.8 H3.4 Z" fill="#3666ad" stroke="#2b5597" stroke-width="1"/>
<path d="M4.6 6.3 H16.6 V18.7 H4.6 Z" fill="none" stroke="#5a88c8" stroke-width=".9"/></symbol>
<symbol id="i-exit" viewBox="0 0 22 22" overflow="visible"><ellipse cx="11.5" cy="22" rx="8" ry="1.2" fill="#000" opacity=".12"/>
<path d="M6.9 0.5 H15.6 L21.8 6.7 V15.3 L15.6 21.5 H6.9 L0.7 15.3 V6.7 Z" fill="url(#gexit)" stroke="#b51616" stroke-width=".9"/>
<path d="M6.6 6.9 L16 16 M16 6.9 L6.6 16" stroke="#eef4f6" stroke-width="2.8"/></symbol>
<symbol id="calico" viewBox="0 0 11 10" overflow="visible"><rect x="1" y=".6" width="8.6" height="9" rx="1.3" fill="#f4f4f4" stroke="#7a7a7a" stroke-width="1"/><path d="M1.4 2.4H9.2" stroke="#aaa" stroke-width="1"/><path d="M1.4 8.8H9.2" stroke="#777" stroke-width="1.2"/><path d="M3 4.6 L5 5.6 L3 6.6 M6.3 4.4 L7 4.2 V7" fill="none" stroke="#555" stroke-width=".9"/><path d="M9.6 6.6 Q10.5 7.2 9.6 8.4" fill="none" stroke="#777" stroke-width=".8"/></symbol><symbol id="calcico" viewBox="0 0 11 10" overflow="visible"><path d="M1.4 1.6 Q1.4 .4 2.6 .4 H9 Q10.2 .4 10.2 1.6 V6.4 Q10.2 9.9 5.8 9.9 Q1.4 9.9 1.4 6.4 Z" fill="#595b58" stroke="#4a4a48" stroke-width=".6"/><rect x="2.6" y="1.2" width="6.4" height="1.4" fill="#9a9c70"/><path d="M2.4 3.3H9.2" stroke="#777" stroke-width=".6"/></symbol></defs><use href="#i-undo" x="50" y="102" width="22" height="22"/><use href="#i-help" x="90" y="102" width="22" height="22"/><use href="#i-new" x="118" y="102" width="22" height="22"/><use href="#i-copy" x="146" y="102" width="22" height="22"/><use href="#i-trash" x="174" y="102" width="22" height="22"/><use href="#i-delete" x="202" y="102" width="22" height="22"/><use href="#i-save" x="230" y="102" width="22" height="22"/><use href="#i-savem" x="258" y="102" width="22" height="22"/><use href="#i-refresh" x="296" y="102" width="22" height="22"/><use href="#i-find" x="324" y="102" width="22" height="22"/><use href="#i-attach" x="352" y="102" width="22" height="22"/><use href="#i-chat" x="380" y="102" width="22" height="22"/><use href="#i-grid" x="408" y="102" width="22" height="22"/><use href="#i-history" x="446" y="102" width="22" height="22"/><use href="#i-home" x="474" y="102" width="22" height="22"/><use href="#i-back" x="502" y="102" width="22" height="22"/><use href="#i-fwd" x="530" y="102" width="22" height="22"/><use href="#i-first" x="568" y="102" width="22" height="22"/><use href="#i-up" x="596" y="102" width="22" height="22"/><use href="#i-down" x="624" y="102" width="22" height="22"/><use href="#i-last" x="652" y="102" width="22" height="22"/><use href="#i-report" x="690" y="102" width="22" height="22"/><use href="#i-archive" x="718" y="102" width="22" height="22"/><use href="#i-pp" x="746" y="102" width="22" height="22"/><use href="#i-print" x="774" y="102" width="22" height="22"/><use href="#i-zoom" x="812" y="102" width="22" height="22"/><use href="#i-workflow" x="840" y="102" width="22" height="22"/><use href="#i-request" x="868" y="102" width="22" height="22"/><use href="#i-product" x="896" y="102" width="22" height="22"/><use href="#i-exit" x="935" y="102" width="22" height="22"/><use href="#i-undo" x="162" y="481" width="22" height="22"/><use href="#i-help" x="202" y="481" width="22" height="22"/><use href="#i-new" x="230" y="481" width="22" height="22"/><use href="#i-copy" x="258" y="481" width="22" height="22"/><use href="#i-trash" x="286" y="481" width="22" height="22"/><use href="#i-delete" x="314" y="481" width="22" height="22"/><use href="#i-save" x="342" y="481" width="22" height="22"/><use href="#i-savem" x="370" y="481" width="22" height="22"/><use href="#i-refresh" x="408" y="481" width="22" height="22"/><use href="#i-find" x="436" y="481" width="22" height="22"/><use href="#i-attach" x="464" y="481" width="22" height="22"/><use href="#i-chat" x="492" y="481" width="22" height="22"/><use href="#i-grid" x="520" y="481" width="22" height="22"/><use href="#i-first" x="558" y="481" width="22" height="22"/><use href="#i-up" x="586" y="481" width="22" height="22"/><use href="#i-downg" x="614" y="481" width="22" height="22"/><use href="#i-lastg" x="642" y="481" width="22" height="22"/><use href="#i-report" x="680" y="481" width="22" height="22"/><use href="#i-archive" x="708" y="481" width="22" height="22"/><use href="#i-ppc" x="736" y="481" width="22" height="22"/><use href="#i-printc" x="764" y="481" width="22" height="22"/><g>
<rect x="47.2" y="43.6" width="10" height="10.4" rx=".6" fill="#f7f7f6" stroke="#b9b8b2" stroke-width=".9"/>
<rect x="48.2" y="44.6" width="8" height="2" fill="#1d4589"/>
<rect x="50.8" y="47.2" width="10.4" height="11" rx=".6" fill="url(#gpage)" stroke="#b5b4ae" stroke-width=".9"/>
<rect x="51.8" y="48.3" width="8.4" height="2" fill="#1d4589"/>
<circle cx="76.4" cy="51.6" r="7" fill="#000" opacity=".1"/><circle cx="76.4" cy="50.8" r="7" fill="url(#gbtn)" stroke="#a29f9a" stroke-width=".8"/><circle cx="916.6" cy="51.6" r="7" fill="#000" opacity=".1"/><circle cx="916.6" cy="50.8" r="7" fill="url(#gbtn)" stroke="#a29f9a" stroke-width=".8"/><circle cx="939.6" cy="51.6" r="7" fill="#000" opacity=".1"/><circle cx="939.6" cy="50.8" r="7" fill="url(#gbtn)" stroke="#a29f9a" stroke-width=".8"/><circle cx="962.6" cy="51.6" r="7" fill="#000" opacity=".1"/><circle cx="962.6" cy="50.8" r="7" fill="url(#gbtn)" stroke="#a29f9a" stroke-width=".8"/><circle cx="76.4" cy="50.8" r=".75" fill="#222"/><path d="M913.4 49.2 L916.6 52.4 L919.8 49.2" fill="none" stroke="#333" stroke-width="1.6"/><path d="M936.4 52.4 L939.6 49.2 L942.8 52.4" fill="none" stroke="#333" stroke-width="1.6"/><path d="M959.4 47.6 L965.8 54 M965.8 47.6 L959.4 54" fill="none" stroke="#333" stroke-width="1.5"/></g></svg>
</body></html>
